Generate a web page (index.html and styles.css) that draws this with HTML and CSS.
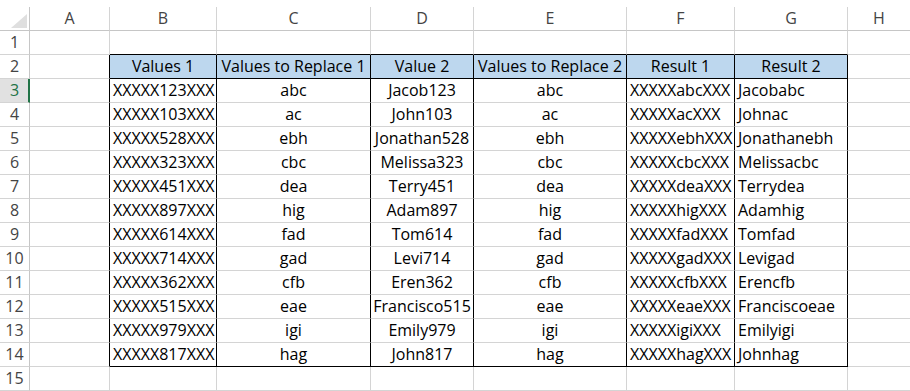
FILE: index.html
```html
<!DOCTYPE html>
<html>
<head>
<meta charset="utf-8">
<link rel="stylesheet" href="styles.css">
</head>
<body>
<div class="sheet">
  <div class="row colhead">
    <div class="c corner"><svg width="16" height="14" viewBox="0 0 16 14"><polygon points="16,0 16,14 0,14" fill="#dfdfdf"/></svg></div>
    <div class="c ch">A</div><div class="c ch">B</div><div class="c ch">C</div><div class="c ch">D</div><div class="c ch">E</div><div class="c ch">F</div><div class="c ch">G</div><div class="c ch last">H</div>
  </div>
  <div class="row">
    <div class="c rh">1</div><div class="c"></div>
    <div class="c kb"></div><div class="c kb"></div><div class="c kb"></div><div class="c kb"></div><div class="c kb"></div><div class="c kb"></div>
    <div class="c last"></div>
  </div>
  <div class="row">
    <div class="c rh">2</div><div class="c k"></div>
    <div class="c k kb hd">Values 1</div><div class="c k kb hd">Values to Replace 1</div><div class="c k kb hd">Value 2</div><div class="c k kb hd">Values to Replace 2</div><div class="c k kb hd">Result 1</div><div class="c k kb hd">Result 2</div>
    <div class="c last"></div>
  </div>
  <div class="row">
    <div class="c rh sel">3</div><div class="c k"></div>
    <div class="c k l">XXXXX123XXX</div><div class="c k m">abc</div><div class="c k m">Jacob123</div><div class="c k m">abc</div><div class="c k l">XXXXXabcXXX</div><div class="c k l">Jacobabc</div>
    <div class="c last"></div>
  </div>
  <div class="row">
    <div class="c rh">4</div><div class="c k"></div>
    <div class="c k l">XXXXX103XXX</div><div class="c k m">ac</div><div class="c k m">John103</div><div class="c k m">ac</div><div class="c k l">XXXXXacXXX</div><div class="c k l">Johnac</div>
    <div class="c last"></div>
  </div>
  <div class="row">
    <div class="c rh">5</div><div class="c k"></div>
    <div class="c k l">XXXXX528XXX</div><div class="c k m">ebh</div><div class="c k m">Jonathan528</div><div class="c k m">ebh</div><div class="c k l">XXXXXebhXXX</div><div class="c k l">Jonathanebh</div>
    <div class="c last"></div>
  </div>
  <div class="row">
    <div class="c rh">6</div><div class="c k"></div>
    <div class="c k l">XXXXX323XXX</div><div class="c k m">cbc</div><div class="c k m">Melissa323</div><div class="c k m">cbc</div><div class="c k l">XXXXXcbcXXX</div><div class="c k l">Melissacbc</div>
    <div class="c last"></div>
  </div>
  <div class="row">
    <div class="c rh">7</div><div class="c k"></div>
    <div class="c k l">XXXXX451XXX</div><div class="c k m">dea</div><div class="c k m">Terry451</div><div class="c k m">dea</div><div class="c k l">XXXXXdeaXXX</div><div class="c k l">Terrydea</div>
    <div class="c last"></div>
  </div>
  <div class="row">
    <div class="c rh">8</div><div class="c k"></div>
    <div class="c k l">XXXXX897XXX</div><div class="c k m">hig</div><div class="c k m">Adam897</div><div class="c k m">hig</div><div class="c k l">XXXXXhigXXX</div><div class="c k l">Adamhig</div>
    <div class="c last"></div>
  </div>
  <div class="row">
    <div class="c rh">9</div><div class="c k"></div>
    <div class="c k l">XXXXX614XXX</div><div class="c k m">fad</div><div class="c k m">Tom614</div><div class="c k m">fad</div><div class="c k l">XXXXXfadXXX</div><div class="c k l">Tomfad</div>
    <div class="c last"></div>
  </div>
  <div class="row">
    <div class="c rh">10</div><div class="c k"></div>
    <div class="c k l">XXXXX714XXX</div><div class="c k m">gad</div><div class="c k m">Levi714</div><div class="c k m">gad</div><div class="c k l">XXXXXgadXXX</div><div class="c k l">Levigad</div>
    <div class="c last"></div>
  </div>
  <div class="row">
    <div class="c rh">11</div><div class="c k"></div>
    <div class="c k l">XXXXX362XXX</div><div class="c k m">cfb</div><div class="c k m">Eren362</div><div class="c k m">cfb</div><div class="c k l">XXXXXcfbXXX</div><div class="c k l">Erencfb</div>
    <div class="c last"></div>
  </div>
  <div class="row">
    <div class="c rh">12</div><div class="c k"></div>
    <div class="c k l">XXXXX515XXX</div><div class="c k m">eae</div><div class="c k m">Francisco515</div><div class="c k m">eae</div><div class="c k l">XXXXXeaeXXX</div><div class="c k l">Franciscoeae</div>
    <div class="c last"></div>
  </div>
  <div class="row">
    <div class="c rh">13</div><div class="c k"></div>
    <div class="c k l">XXXXX979XXX</div><div class="c k m">igi</div><div class="c k m">Emily979</div><div class="c k m">igi</div><div class="c k l">XXXXXigiXXX</div><div class="c k l">Emilyigi</div>
    <div class="c last"></div>
  </div>
  <div class="row">
    <div class="c rh">14</div><div class="c k"></div>
    <div class="c k kb l">XXXXX817XXX</div><div class="c k kb m">hag</div><div class="c k kb m">John817</div><div class="c k kb m">hag</div><div class="c k kb l">XXXXXhagXXX</div><div class="c k kb l">Johnhag</div>
    <div class="c last"></div>
  </div>
  <div class="row">
    <div class="c rh">15</div><div class="c"></div>
    <div class="c"></div><div class="c"></div><div class="c"></div><div class="c"></div><div class="c"></div><div class="c"></div>
    <div class="c last"></div>
  </div>
</div>
</body>
</html>
```

FILE: styles.css
```css
html, body {
  margin: 0;
  padding: 0;
  background: #ffffff;
}
body {
  padding-top: 7px;
  font-family: "Open Sans", Lato, "Liberation Sans", sans-serif;
  font-size: 16px;
  color: #000000;
  overflow: hidden;
}
.sheet {
  display: flex;
  flex-direction: column;
}
.row {
  display: grid;
  grid-template-columns: 30px 80px 107px 154px 103px 153px 108px 113px 1fr;
  height: 24px;
}
.c {
  box-sizing: border-box;
  border-right: 1px solid #d4d4d4;
  border-bottom: 1px solid #d4d4d4;
  line-height: 23px;
  white-space: nowrap;
  overflow: hidden;
}
.c.last {
  border-right: none;
}
.corner {
  display: flex;
  justify-content: flex-end;
  align-items: flex-end;
  padding: 0 2px 2px 0;
  border-right-color: #c6c6c6;
  border-bottom-color: #c6c6c6;
}
.corner svg {
  display: block;
}
.ch {
  text-align: center;
  color: #444444;
  border-bottom-color: #c6c6c6;
}
.rh {
  text-align: center;
  color: #444444;
  border-right-color: #c6c6c6;
}
.rh.sel {
  background: #e1e1e1;
  color: #217346;
  border-right: 2px solid #217346;
  padding-left: 1px;
}
.k {
  border-right-color: #000000;
}
.kb {
  border-bottom-color: #000000;
}
.hd {
  background: #bdd7ee;
  text-align: center;
}
.l {
  text-align: left;
  padding-left: 3px;
}
.m {
  text-align: center;
}
```
